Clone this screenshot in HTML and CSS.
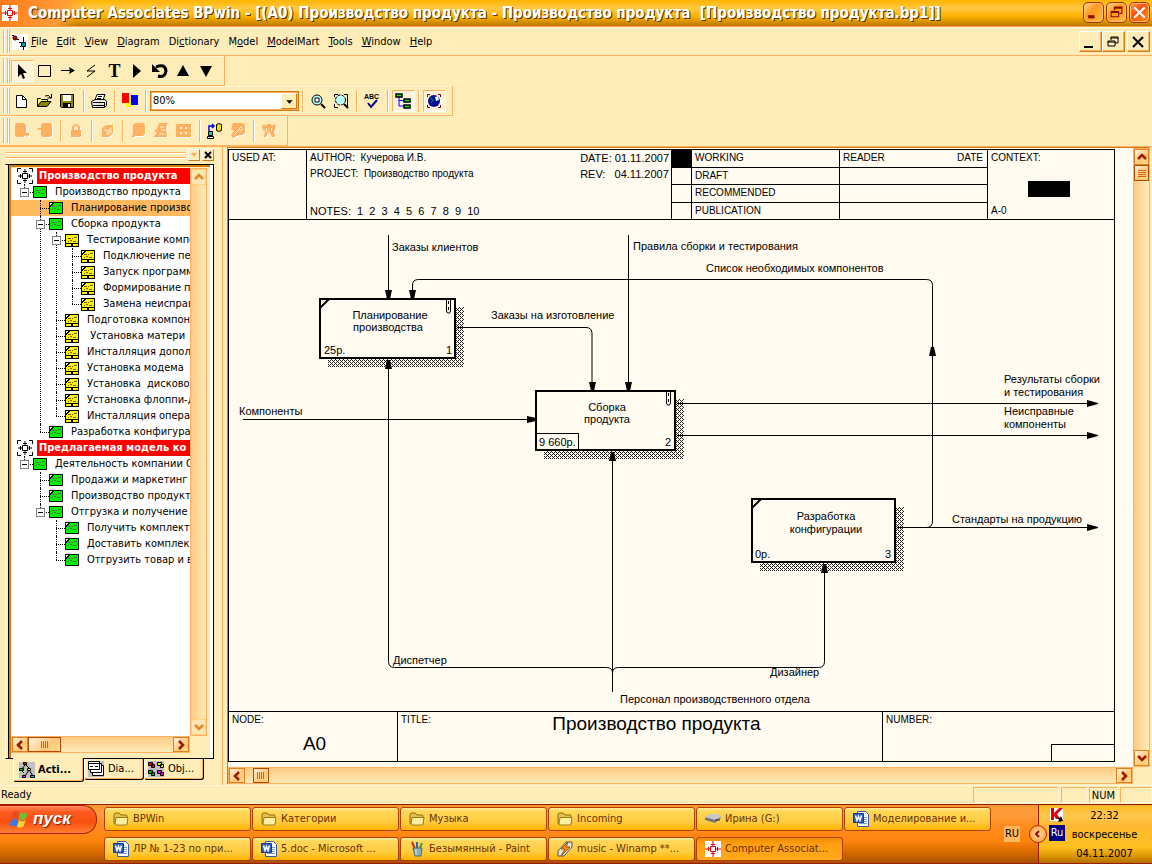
FILE: index.html
```html
<!DOCTYPE html>
<html lang="ru">

<head>
  <meta charset="utf-8">
  <title>Computer Associates BPwin</title>
  <link rel="stylesheet" href="styles.css">
</head>

<body>
  <svg class="defs" aria-hidden="true">
    <symbol id="logo" viewBox="0 0 16 16">
      <rect width="16" height="16" fill="#fff" />
      <path d="M5.500 5.500h5v5h-5zM8 0v5M8 11v5M0 8h5M11 8h5M6 3.500h4M6 12.500h4M3.500 6v4M12.500 6v4" fill="none" stroke="#e00000" />
    </symbol>
    <symbol id="model" viewBox="0 0 16 16">
      <path d="M5.500 5.500h5v5h-5zM8 1v4M8 11v4M1 8h4M11 8h4M6 3.500h4M6 12.500h4M3.500 6v4M12.500 6v4M.5 4V.5H4M12 .5h3.500V4M15.500 12v3.500H12M4 15.500H.5V12" fill="none" stroke="#000" />
    </symbol>
    <symbol id="green" viewBox="0 0 14 14">
      <path d="M0 1h14v12H0z" fill="#0e1200" />
      <path d="M1 2h12v10H1z" fill="#00f000" />
      <path d="M3 5.500h3M7 5.500h1M9 4.500h3M3 8.500h1M5 7.500h2M8 8.500h3" stroke="#587058" />
    </symbol>
    <symbol id="green-leaf" viewBox="0 0 14 14">
      <use href="#green" width="14" height="14" />
      <path d="M1 2h3L1 5z" fill="#fff" />
      <path d="M1 5.500L4.500 2" stroke="#000" />
    </symbol>
    <symbol id="yellow" viewBox="0 0 14 14">
      <path d="M0 1h14v13H0z" fill="#000" />
      <path d="M1 2h12v8H1zM1 11h5v2H1zM8 11h5v2H8z" fill="#fff000" />
      <path d="M3 5.500h3M7 5.500h1M9 4.500h3M3 8.500h1M5 7.500h2M8 8.500h3" stroke="#6a6540" />
    </symbol>
    <symbol id="yellow-leaf" viewBox="0 0 14 14">
      <use href="#yellow" width="14" height="14" />
      <path d="M1 2h3L1 5z" fill="#fff" />
      <path d="M1 5.500L4.500 2" stroke="#000" />
    </symbol>
    <symbol id="chevron" viewBox="0 0 10 10">
      <path d="M1 7l4-4 4 4" fill="none" stroke="currentColor" stroke-width="2.500" />
    </symbol>
    <symbol id="folder" viewBox="0 0 16 16">
      <path d="M1 4q0-2 2-2h3l2 2h5q1 0 1 1v8H2q-1 0-1-1z" fill="#e6c24a" stroke="#8a6a10" />
      <path d="M3 6.500h12l-1 6.500q0 1-1 1H3q-1 0-1-1z" fill="#fff0a0" stroke="#9b7a18" />
    </symbol>
    <symbol id="word" viewBox="0 0 16 16">
      <path d="M4.500 .5h8l3 3v12h-11z" fill="#fff" stroke="#3c5aa0" />
      <path d="M11 6.500h3M11 8.500h3M6 12.500h8M11 10.500h3" stroke="#7d9bd8" />
      <path d="M.5 2.500h10v9H.5z" fill="#2f61c0" stroke="#17377e" />
      <path d="M2.500 4.500l1.500 5 1.500-4 1.500 4 1.500-5" fill="none" stroke="#fff" stroke-width="1.500" />
    </symbol>
    <symbol id="clip" viewBox="0 0 7 16">
      <path d="M1.500 1.500V13l1 2h2l1-2V1.500M3.500 0v2M3.500 9v3M3.500 3v3" fill="none" stroke="#000" />
    </symbol>
    <symbol id="magnifier" viewBox="0 0 16 16">
      <circle cx="7" cy="7" r="5" fill="#b8ffff" stroke="#000" />
      <path d="M5 5h4v4H5z" fill="#fff" stroke="#000" />
      <path d="M11 11l4 4" stroke="#000" stroke-width="2" />
    </symbol>
    <symbol id="restore" viewBox="0 0 14 14">
      <path d="M5 5V2h7v6H9M4.500 3h8M2 6h7v5H2zM1.500 7h8" fill="none" stroke="currentColor" />
    </symbol>
  </svg>

  <header class="titlebar">
    <svg class="icon16"><use href="#logo" /></svg>
    <h1 class="title">Computer Associates BPwin - [(A0) Производство продукта - Производство продукта&nbsp; [Производство продукта.bp1]]</h1>
    <div class="window-buttons">
      <button class="xp-button" aria-label="Свернуть"><svg viewBox="0 0 14 14"><path d="M2 11h6" stroke="#8c1000" stroke-width="3" /></svg></button>
      <button class="xp-button" aria-label="Восстановить"><svg viewBox="0 0 14 14"><use href="#restore" /></svg></button>
      <button class="xp-button xp-close" aria-label="Закрыть"><svg viewBox="0 0 14 14"><path d="M2 2l10 10M12 2L2 12" stroke="#fff" stroke-width="2" /></svg></button>
    </div>
  </header>

  <nav class="menubar">
    <span class="grip"></span>
    <svg class="doc-icon" viewBox="0 0 16 16">
      <rect width="16" height="16" fill="#fff" />
      <path d="M0 1.500h2M5 5.500h2M7 8.500h2M11.500 3v6M9 12.500h-1M11.500 13v3" stroke="#000" fill="none" />
      <circle cx="3" cy="4" r="2" fill="#c00000" stroke="#300" />
      <path d="M9.500 8.500h4v4h-4z" fill="#00a0a0" stroke="#000" />
    </svg>
    <a class="menu-item" href="#"><u>F</u>ile</a>
    <a class="menu-item" href="#"><u>E</u>dit</a>
    <a class="menu-item" href="#"><u>V</u>iew</a>
    <a class="menu-item" href="#"><u>D</u>iagram</a>
    <a class="menu-item" href="#">Di<u>c</u>tionary</a>
    <a class="menu-item" href="#">M<u>o</u>del</a>
    <a class="menu-item" href="#"><u>M</u>odelMart</a>
    <a class="menu-item" href="#"><u>T</u>ools</a>
    <a class="menu-item" href="#"><u>W</u>indow</a>
    <a class="menu-item" href="#"><u>H</u>elp</a>
    <div class="child-buttons">
      <button class="flat-button" aria-label="Minimize"><svg viewBox="0 0 14 14"><path d="M1 12h9" stroke="#000" stroke-width="2" /></svg></button>
      <button class="flat-button" aria-label="Restore"><svg viewBox="0 0 14 14"><use href="#restore" /></svg></button>
      <button class="flat-button flat-close" aria-label="Close"><svg viewBox="0 0 14 14"><path d="M2 2l10 10M12 2L2 12" stroke="#000" stroke-width="2" /></svg></button>
    </div>
  </nav>

  <div class="toolbar">
    <span class="grip"></span>
    <button class="tool pressed" aria-label="Pointer"><svg viewBox="0 0 16 16"><path d="M4 1v13l3-3 2 5 2-1-2-5h4z" /></svg></button>
    <button class="tool" aria-label="Activity box"><svg viewBox="0 0 16 16"><path d="M1.500 2.500h12v11h-12z" fill="none" stroke="#000" /></svg></button>
    <button class="tool" aria-label="Arrow"><svg viewBox="0 0 16 16"><path d="M1 7.500h9" stroke="#000" /><path d="M9 4l6 3.500L9 11l1-3.500z" /></svg></button>
    <button class="tool" aria-label="Squiggle"><svg viewBox="0 0 16 16"><path d="M12 2L4 8h8l-8 6" fill="none" stroke="#000" /></svg></button>
    <button class="tool tool-text" aria-label="Text">T</button>
    <button class="tool" aria-label="Diagram manager"><svg viewBox="0 0 16 16"><path d="M4 1l8 7-8 7z" /></svg></button>
    <button class="tool" aria-label="Go to sibling"><svg viewBox="0 0 16 16"><path d="M4 4q9-4 10 4-1 7-8 5" fill="none" stroke="#000" stroke-width="3" /><path d="M0 1v8h8z" /></svg></button>
    <button class="tool" aria-label="Go to parent"><svg viewBox="0 0 16 16"><path d="M8 2l6 11H2z" /></svg></button>
    <button class="tool" aria-label="Go to child"><svg viewBox="0 0 16 16"><path d="M8 14L2 3h12z" /></svg></button>
  </div>

  <div class="toolbar">
    <span class="grip"></span>
    <button class="tool" aria-label="New"><svg viewBox="0 0 16 16"><path d="M2.500 2.500h6l4 4v8h-10zM8.500 2.500v4h4" fill="#fff" stroke="#000" /></svg></button>
    <button class="tool" aria-label="Open"><svg viewBox="0 0 16 16"><path d="M.5 13V5.500h3l1 1h6V8" fill="#ffff70" stroke="#000" /><path d="M.5 13.500L4 8.500h10l-4 5z" fill="#8a8400" stroke="#000" /><path d="M8 3q4-2 6 2M14.500 1v4h-4" fill="none" stroke="#000" /></svg></button>
    <button class="tool" aria-label="Save"><svg viewBox="0 0 16 16"><path d="M.5 1.500h13v13h-12l-1-1z" fill="#8a8400" stroke="#000" /><path d="M3 2h8v6H3z" fill="#fff" /><path d="M3 10h8v4H3z" /><path d="M8 11h2v3H8z" fill="#fff" /></svg></button>
    <span class="separator"></span>
    <button class="tool" aria-label="Print"><svg viewBox="0 0 16 16"><path d="M4 7l2-5.500h8L12 7" fill="#fff" stroke="#000" /><path d="M7 3.500h4M6 5.500h4" stroke="#000" /><path d="M.5 8.500L4 6.500h10l1.500 2v4l-2 2h-12z" fill="#e8e8e8" stroke="#000" /><path d="M2 9.500h11M2 12.500h11M13.500 9v5" stroke="#000" /><path d="M8 11h2" stroke="#e0d000" /></svg></button>
    <span class="separator"></span>
    <button class="tool" aria-label="Colors"><svg viewBox="0 0 16 16"><path d="M4 5h6v9H4z" fill="#ff0" /><path d="M0 0h7v10H0z" fill="#f00" /><path d="M9 2h7v10H9z" fill="#00f" /></svg></button>
    <span class="separator"></span>
    <div class="zoom-box">
      <select class="zoom-select" aria-label="Zoom">
        <option>80%</option>
      </select>
      <svg class="zoom-arrow" viewBox="0 0 16 16"><path d="M5 7h7l-3.500 4z" /></svg>
    </div>
    <span class="separator"></span>
    <button class="tool" aria-label="Zoom"><svg viewBox="0 0 16 16"><use href="#magnifier" /></svg></button>
    <button class="tool" aria-label="Fit to window"><svg viewBox="0 0 16 16"><path d="M1.500 4V1.500H5M11 1.500h3.500V14M1.500 11v3.500H5" fill="none" stroke="#000" /><circle cx="7.500" cy="7" r="5" fill="#b8ffff" stroke="#000" stroke-dasharray="3 1" /><path d="M11 11l4 4" stroke="#000" stroke-width="2" /></svg></button>
    <span class="separator"></span>
    <button class="tool" aria-label="Spelling"><svg viewBox="0 0 16 16"><text class="abc" x="0" y="6">ABC</text><path d="M4 10l3 4 6-7" fill="none" stroke="#000080" stroke-width="2" /></svg></button>
    <span class="separator"></span>
    <button class="tool pressed" aria-label="Model explorer"><svg viewBox="0 0 16 16"><path d="M4 4v9h5M4 7.500h5" fill="none" stroke="#00f" /><path d="M1 1h6v3H1zM9 6h6v3H9zM9 12h6v3H9z" fill="#0e0" stroke="#000" stroke-width="1.500" /></svg></button>
    <span class="separator"></span>
    <button class="tool pressed" aria-label="ModelMart"><svg viewBox="0 0 16 16"><circle cx="8" cy="8" r="6" fill="#001090" /><path d="M9 4l3-1 1 4-3 1z" fill="#e0ffff" /><path d="M4 5l3 2-2 3" fill="none" stroke="#008080" /><path d="M1.500 4V1.500H4M12 1.500h2.500V4M14.500 12v2.500H12M4 14.500H1.500V12" fill="none" stroke="#800000" /></svg></button>
  </div>

  <div class="toolbar toolbar-dim">
    <span class="grip"></span>
    <button class="tool" disabled aria-label="Open from mart"><svg viewBox="0 0 16 16"><path d="M1 2l2-2h7l2 2v8h3v2l-2 2-2-2-1 2H3l-2-2z" /></svg></button>
    <button class="tool" disabled aria-label="Save to mart"><svg viewBox="0 0 16 16"><path d="M0 2l1 3h3V2l2-2h7l2 2v10l-2 2H6l-2-2V7H1z" /></svg></button>
    <span class="separator"></span>
    <button class="tool" disabled aria-label="Lock"><svg viewBox="0 0 16 16"><path d="M5 7V4q3-4 6 0v3" fill="none" stroke="#ffb060" stroke-width="2" /><path d="M3 7h10v7H3z" /></svg></button>
    <span class="separator"></span>
    <button class="tool" disabled aria-label="Library"><svg viewBox="0 0 16 16"><path d="M3 5l4-3h7v8l-4 4H3z" /><path d="M5 7h3v5M10 6v6M12 4v6" fill="none" stroke="#fff6dc" /></svg></button>
    <span class="separator"></span>
    <button class="tool" disabled aria-label="Review"><svg viewBox="0 0 16 16"><path d="M3 2l2-2h8l2 2v9l-2 2H6l-5 2 2-4z" /></svg></button>
    <button class="tool" disabled aria-label="Versions"><svg viewBox="0 0 16 16"><path d="M6 0h9l-2 4 1 10H0l4-4-3-2 3-2z" /><path d="M7 4h4M8 7h4M6 11h5" stroke="#fff6dc" /></svg></button>
    <button class="tool" disabled aria-label="Grid"><svg viewBox="0 0 16 16"><path d="M0 1h15v13H0z" /><path d="M4 5h2M9 5h2M4 10h2M9 10h2" stroke="#fff6dc" stroke-width="2" /></svg></button>
    <span class="separator"></span>
    <button class="tool" aria-label="Synchronize"><svg viewBox="0 0 16 16"><path d="M2 8V3h5M5 1l2 2-2 2" fill="none" stroke="#00f" stroke-width="1.500" /><path d="M9.500 1.500q2-2 5 0v6q-3 2-5 0z" fill="#f0e000" stroke="#000" /><path d="M1.500 8.500h4v4h-4z" fill="#00d0d0" stroke="#000" /><path d="M.5 13.500h6v2h-6z" fill="#fff" stroke="#000" /></svg></button>
    <button class="tool" disabled aria-label="Tools"><svg viewBox="0 0 16 16"><path d="M3 0h10l2 2v8l-2 2H9l-6 3-2-3 3-4-3-2z" /><path d="M4 12l5-5q0-3 3-3M10 8l3-2" fill="none" stroke="#fff6dc" /></svg></button>
    <span class="separator"></span>
    <button class="tool" disabled aria-label="Users"><svg viewBox="0 0 16 16"><path d="M1 3l2-2 2 2 1-2h4l1 2 2-2 2 2-1 4-1 1 1 6h-3l-2-4-1 2-1-2-2 4H3l1-6-2-1z" /><path d="M5.500 5v3M10.500 5v3M8 8v3" stroke="#fff6dc" /></svg></button>
  </div>

  <main class="workspace">
    <aside class="explorer">
      <div class="explorer-head">
        <span class="explorer-grip"></span>
        <button class="mini-button" aria-label="Collapse"><svg viewBox="0 0 8 8"><path d="M1 2h6L4 6z" fill="#ffb060" /></svg></button>
        <button class="mini-button" aria-label="Close explorer"><svg viewBox="0 0 8 8"><path d="M1 1l6 6M7 1L1 7" stroke="#000" stroke-width="2" /></svg></button>
      </div>
      <div class="explorer-frame">
        <div class="tree">
          <div class="tree-root"><svg class="icon16"><use href="#model" /></svg><b>Производство продукта</b></div>
          <ul>
            <li>
              <div class="row"><button class="toggle" aria-label="Collapse"></button><svg class="node"><use href="#green" /></svg><span>Производство продукта</span></div>
              <ul>
                <li><div class="row selected"><svg class="node"><use href="#green-leaf" /></svg><span>Планирование произво</span></div></li>
                <li>
                  <div class="row"><button class="toggle" aria-label="Collapse"></button><svg class="node"><use href="#green" /></svg><span>Сборка продукта</span></div>
                  <ul>
                    <li>
                      <div class="row"><button class="toggle" aria-label="Collapse"></button><svg class="node"><use href="#yellow" /></svg><span>Тестирование компо</span></div>
                      <ul>
                        <li><div class="row"><svg class="node"><use href="#yellow-leaf" /></svg><span>Подключение пер</span></div></li>
                        <li><div class="row"><svg class="node"><use href="#yellow-leaf" /></svg><span>Запуск программ</span></div></li>
                        <li><div class="row"><svg class="node"><use href="#yellow-leaf" /></svg><span>Формирование п</span></div></li>
                        <li><div class="row"><svg class="node"><use href="#yellow-leaf" /></svg><span>Замена неисправ</span></div></li>
                      </ul>
                    </li>
                    <li><div class="row"><svg class="node"><use href="#yellow-leaf" /></svg><span>Подготовка компоне</span></div></li>
                    <li><div class="row"><svg class="node"><use href="#yellow-leaf" /></svg><span> Установка матери</span></div></li>
                    <li><div class="row"><svg class="node"><use href="#yellow-leaf" /></svg><span>Инсталляция допол</span></div></li>
                    <li><div class="row"><svg class="node"><use href="#yellow-leaf" /></svg><span>Установка модема</span></div></li>
                    <li><div class="row"><svg class="node"><use href="#yellow-leaf" /></svg><span>Установка  дисково</span></div></li>
                    <li><div class="row"><svg class="node"><use href="#yellow-leaf" /></svg><span>Установка флоппи-д</span></div></li>
                    <li><div class="row"><svg class="node"><use href="#yellow-leaf" /></svg><span>Инсталляция опера</span></div></li>
                  </ul>
                </li>
                <li><div class="row"><svg class="node"><use href="#green-leaf" /></svg><span>Разработка конфигура</span></div></li>
              </ul>
            </li>
          </ul>
          <div class="tree-root"><svg class="icon16"><use href="#model" /></svg><b>Предлагаемая модель ко</b></div>
          <ul>
            <li>
              <div class="row"><button class="toggle" aria-label="Collapse"></button><svg class="node"><use href="#green" /></svg><span>Деятельность компании Q</span></div>
              <ul>
                <li><div class="row"><svg class="node"><use href="#green-leaf" /></svg><span>Продажи и маркетинг</span></div></li>
                <li><div class="row"><svg class="node"><use href="#green-leaf" /></svg><span>Производство продукта</span></div></li>
                <li>
                  <div class="row"><button class="toggle" aria-label="Collapse"></button><svg class="node"><use href="#green" /></svg><span>Отгрузка и получение</span></div>
                  <ul>
                    <li><div class="row"><svg class="node"><use href="#green-leaf" /></svg><span>Получить комплекту</span></div></li>
                    <li><div class="row"><svg class="node"><use href="#green-leaf" /></svg><span>Доставить комплек</span></div></li>
                    <li><div class="row"><svg class="node"><use href="#green-leaf" /></svg><span>Отгрузить товар и в</span></div></li>
                  </ul>
                </li>
              </ul>
            </li>
          </ul>
        </div>
        <div class="scroll-v faded">
          <button class="scroll-button" aria-label="Up"><svg><use href="#chevron" /></svg></button>
          <span class="spacer"></span>
          <button class="scroll-button" aria-label="Down"><svg class="down"><use href="#chevron" /></svg></button>
        </div>
        <div class="scroll-h">
          <button class="scroll-button" aria-label="Left"><svg class="left"><use href="#chevron" /></svg></button>
          <span class="thumb thumb-wide"><i class="ridges"></i></span>
          <span class="spacer"></span>
          <button class="scroll-button" aria-label="Right"><svg class="right"><use href="#chevron" /></svg></button>
        </div>
      </div>
      <div class="tabs">
        <button class="tab tab-active"><svg class="icon16" viewBox="0 0 16 16"><rect width="16" height="16" fill="#c0c0c0" /><path d="M6 3L3 7M7 3l4 4M10 8l-4 6M10 8l4 6M2 8l3 3" stroke="#000" fill="none" /><path d="M4.500 .5h3v2h-3z" fill="red" stroke="#000" /><path d="M.5 6.500h4v2h-4z" fill="#0c0" stroke="#000" /><path d="M8.500 6.500h3v2h-3z" fill="#ee0" stroke="#000" /><path d="M3.500 13.500h3v2h-3z" fill="#f0f" stroke="#000" /><path d="M11.500 13.500h4v2h-4z" fill="#0cc" stroke="#000" /></svg>Acti...</button>
        <button class="tab"><svg class="icon16" viewBox="0 0 16 16"><rect width="16" height="16" fill="#c0c0c0" /><path d="M4.500 4.500h11v10h-11z" fill="#fff" stroke="#000" /><path d="M2.500 2.500h11v9h-11z" fill="#fff" stroke="#000" /><path d="M.5 .5h11v8H.5z" fill="#fff" stroke="#000" /><path d="M1 2.500h10M2 5.500h3M7 5.500h3M5 11.500h8" stroke="#000" /></svg>Dia...</button>
        <button class="tab"><svg class="icon16" viewBox="0 0 16 16"><rect width="16" height="16" fill="#c0c0c0" /><g stroke="#000"><path d="M.5 1.500h4v3h-4zM3.500 3.500h3v3h-3z" fill="red" /><path d="M9.500 1.500h4v3h-4zM12.500 3.500h3v3h-3z" fill="#ee0" /><path d="M.5 9.500h4v3h-4zM3.500 11.500h3v3h-3z" fill="#0c0" /><path d="M9.500 9.500h4v3h-4zM12.500 11.500h3v3h-3z" fill="#f0f" /></g></svg>Obj...</button>
      </div>
    </aside>

    <section class="viewport">
      <div class="sheet">
        <div class="kit-head">
          <div class="kit-used">USED AT:</div>
          <div class="kit-author">
            <span>AUTHOR:&nbsp; Кучерова И.В.</span><span class="kit-date">DATE: 01.11.2007</span>
            <span>PROJECT:&nbsp; Производство продукта</span><span class="kit-date">REV:&nbsp;&nbsp; 04.11.2007</span>
            <span class="kit-notes">NOTES:&nbsp; 1&nbsp; 2&nbsp; 3&nbsp; 4&nbsp; 5&nbsp; 6&nbsp; 7&nbsp; 8&nbsp; 9&nbsp; 10</span>
          </div>
          <div class="kit-status">
            <i class="mark marked"></i><span>WORKING</span><span class="reader">READER<em>DATE</em></span>
            <i class="mark"></i><span>DRAFT</span><span></span>
            <i class="mark"></i><span>RECOMMENDED</span><span></span>
            <i class="mark"></i><span>PUBLICATION</span><span></span>
          </div>
          <div class="kit-context">
            <span>CONTEXT:</span>
            <i class="context-box"></i>
            <span>A-0</span>
          </div>
        </div>

        <svg class="diagram" viewBox="229 220 885 491">
          <defs>
            <pattern id="dither" width="4" height="4" patternUnits="userSpaceOnUse">
              <path d="M0 0h1v1H0zM2 0h1v1H2zM1 1h1v1H1zM0 2h1v1H0zM2 2h1v1H2zM3 3h1v1H3z" fill="#222" />
            </pattern>
          </defs>

          <!-- shadows -->
          <g fill="url(#dither)">
            <path d="M456 307h8v60H328v-8h128z" />
            <path d="M676 399h8v60H544v-8h132z" />
            <path d="M896 507h8v64H760v-8h136z" />
          </g>

          <!-- arrows -->
          <g class="arrows">
            <path d="M388.500 235v64" />
            <path d="M628.500 235v156" />
            <path d="M412.500 298v-13q0-5.500 6-5.500h508q6 0 6 6V521q0 6.500-6 6.500" />
            <path d="M457 327.500h129q6 0 6 6V391" />
            <path d="M243 419.500h293" />
            <path d="M677 403.500h418M677 435.500h418M897 527.500h198" />
            <path d="M612.500 692V452" />
            <path d="M612.500 673q0-5.500-6-5.500h-212q-6 0-6-6V360" />
            <path d="M612.500 673q0-5.500 6-5.500h200q6 0 6-6V564" />
          </g>
          <g class="heads">
            <path d="M385 290h7l-2 9h-3zM409 290h7l-2 9h-3zM589 382h7l-2 9h-3zM625 382h7l-2 9h-3z" />
            <path d="M387 360h3l2 9h-7zM611 452h3l2 9h-7zM823 564h3l2 9h-7zM931 347h3l2 9h-7z" />
            <path d="M527 416l9 2v3l-9 2zM1087 400l11 3v1l-11 3zM1087 432l11 3v1l-11 3zM1087 524l11 3v1l-11 3z" />
          </g>

          <!-- activities -->
          <g class="boxes">
            <rect x="320" y="299" width="135" height="59" />
            <rect x="536" y="391" width="139" height="59" />
            <rect x="752" y="499" width="143" height="63" />
            <path d="M320 308l9-9M752 508l9-9" />
          </g>
          <path d="M537 433.500h41.500V450" fill="none" stroke="#000" />
          <use href="#clip" x="445" y="298" width="7" height="16" />
          <use href="#clip" x="665" y="390" width="7" height="16" />

          <g class="labels centered">
            <text x="390" y="319">Планирование</text>
            <text x="388" y="331">производства</text>
            <text x="607" y="411">Сборка</text>
            <text x="607" y="423">продукта</text>
            <text x="826" y="520">Разработка</text>
            <text x="826" y="533">конфигурации</text>
          </g>
          <g class="labels">
            <text x="392" y="251">Заказы клиентов</text>
            <text x="633" y="250">Правила сборки и тестирования</text>
            <text x="706" y="272">Список необходимых компонентов</text>
            <text x="491" y="319">Заказы на изготовление</text>
            <text x="239" y="415">Компоненты</text>
            <text x="1004" y="383">Результаты сборки</text>
            <text x="1004" y="396">и тестирования</text>
            <text x="1004" y="415">Неисправные</text>
            <text x="1004" y="428">компоненты</text>
            <text x="952" y="523">Стандарты на продукцию</text>
            <text x="393" y="664">Диспетчер</text>
            <text x="770" y="676">Дизайнер</text>
            <text x="620" y="703">Персонал производственного отдела</text>
          </g>
          <g class="labels">
            <text x="324" y="354">25р.</text>
            <text x="446" y="354">1</text>
            <text x="539" y="446">9 660р.</text>
            <text x="665" y="446">2</text>
            <text x="755" y="558">0р.</text>
            <text x="885" y="558">3</text>
          </g>
        </svg>

        <div class="kit-foot">
          <div class="foot-node"><span>NODE:</span><strong>A0</strong></div>
          <div class="foot-title"><span>TITLE:</span><strong>Производство продукта</strong></div>
          <div class="foot-number"><span>NUMBER:</span><i class="corner"></i></div>
        </div>
      </div>
      <div class="scroll-v">
        <button class="scroll-button" aria-label="Up"><svg><use href="#chevron" /></svg></button>
        <span class="thumb thumb-v"><i class="ridges"></i></span>
        <span class="spacer"></span>
        <button class="scroll-button" aria-label="Down"><svg class="down"><use href="#chevron" /></svg></button>
      </div>
      <div class="scroll-h">
        <button class="scroll-button" aria-label="Left"><svg class="left"><use href="#chevron" /></svg></button>
        <span class="thumb thumb-far"><i class="ridges"></i></span>
        <span class="spacer"></span>
        <button class="scroll-button" aria-label="Right"><svg class="right"><use href="#chevron" /></svg></button>
      </div>
    </section>
  </main>

  <footer class="statusbar">
    <span class="status-text">Ready</span>
    <span class="pane pane-wide"></span>
    <span class="pane"></span>
    <span class="pane">NUM</span>
    <span class="pane pane-last"></span>
  </footer>

  <div class="taskbar">
    <button class="start">
      <svg viewBox="0 0 20 20"><path d="M4 4q3-2 6 0l-1 6q-3-2-6 0z" fill="#e84a20" /><path d="M11 4q3 2 7 0l-2 6q-3 2-6 0z" fill="#6cc030" /><path d="M3 11q3-2 6 0l-1 6q-3-2-7 0z" fill="#3a78e8" /><path d="M10 11q3 2 6 0l-2 6q-3 2-6 0z" fill="#f8d030" /></svg>
      пуск
    </button>
    <div class="tasks">
      <button class="task"><svg class="icon16"><use href="#folder" /></svg>BPWin</button>
      <button class="task"><svg class="icon16"><use href="#folder" /></svg>Категории</button>
      <button class="task"><svg class="icon16"><use href="#folder" /></svg>Музыка</button>
      <button class="task"><svg class="icon16"><use href="#folder" /></svg>Incoming</button>
      <button class="task"><svg class="icon16" viewBox="0 0 16 16"><path d="M0 7l5-3h9l2 3-6 5-10-3z" fill="#777" /><path d="M0 6l5-3h9l2 3-6 3z" fill="#c8c8c8" /><path d="M10 9h5" stroke="#333" /></svg>Ирина (G:)</button>
      <button class="task"><svg class="icon16"><use href="#word" /></svg>Моделирование и...</button>
      <button class="task"><svg class="icon16"><use href="#word" /></svg>ЛР № 1-23 по при...</button>
      <button class="task"><svg class="icon16"><use href="#word" /></svg>5.doc - Microsoft ...</button>
      <button class="task"><svg class="icon16" viewBox="0 0 16 16"><path d="M6 8L3 1" stroke="#d03020" stroke-width="2" /><path d="M8 10V1" stroke="#2f60c0" stroke-width="2" /><path d="M10 9l3-7" stroke="#30a040" stroke-width="2" /><path d="M4 7h9l-1 8H6z" fill="#8ab0b8" stroke="#4a6a70" /><path d="M7 8v6" stroke="#d8ecf0" /></svg>Безымянный - Paint</button>
      <button class="task"><svg class="icon16" viewBox="0 0 16 16"><path d="M9 1h6v5L7 15H1v-5z" fill="#e0e0e0" stroke="#555" /><path d="M11 1L4 8h4l-4 7 9-9H9z" fill="#ff9a10" stroke="#a05000" /></svg>music - Winamp **...</button>
      <button class="task task-active"><svg class="icon16"><use href="#logo" /></svg>Computer Associat...</button>
    </div>
    <span class="lang">RU</span>
    <div class="tray">
      <button class="tray-toggle" aria-label="Show hidden icons"><svg viewBox="0 0 10 10"><path d="M6 2L3 5l3 3" fill="none" stroke="#8c1000" stroke-width="2" /></svg></button>
      <div class="tray-icons">
        <svg viewBox="0 0 16 16"><path d="M1 1h13v13H1z" fill="#fff" /><path d="M2 1h3v5l5-5h4L8 7l3 5H7L5 9v4H2z" fill="#e00010" /><path d="M8 10l3 1 1-2 2 5-5 1 1-2z" /></svg>
        <span class="layout">Ru</span>
      </div>
      <div class="clock"><span>22:32</span><span>воскресенье</span><span>04.11.2007</span></div>
    </div>
  </div>
</body>

</html>
```
FILE: styles.css
```css
* {
  box-sizing: border-box;
  margin: 0;
  padding: 0;
}

:root {
  --face: #feecb9;
  --line: #ffb060;
  --edge: #d17a10;
  --paper: #fffbf0;
  --brick: #9c1c00;
}

body {
  display: flex;
  flex-direction: column;
  height: 100vh;
  overflow: hidden;
  background: var(--face);
  color: #000;
  font-family: "DejaVu Sans Condensed", "DejaVu Sans", sans-serif;
  font-size: 11px;
  line-height: 16px;
}

button {
  background: none;
  border: 0;
  font: inherit;
  color: inherit;
}

svg {
  display: block;
  flex: none;
}

.defs {
  position: absolute;
  width: 0;
  height: 0;
}

.icon16 {
  width: 16px;
  height: 16px;
}

.spacer {
  flex: 1;
}

/* title bar */

.titlebar {
  flex: none;
  display: flex;
  align-items: center;
  height: 28px;
  padding: 0 2px 2px 2px;
  border-bottom: 1px solid #fff6dc;
  background:
    linear-gradient(115deg, #ff7a18 0, #ff9c38 60px, transparent 80px),
    linear-gradient(#ffb400 0, #ffbe20 4px, #ffc845 8px, #ffb400 16px, #c88400 24px, #b87400 26px, #ffa040 26px);
}

.title {
  flex: 1;
  margin-left: 10px;
  overflow: hidden;
  color: #fff;
  font-size: 15px;
  font-weight: bold;
  line-height: 24px;
  white-space: nowrap;
  text-shadow: 1px 1px #5a3200;
}

.window-buttons {
  display: flex;
  gap: 2px;
}

.xp-button {
  width: 21px;
  height: 21px;
  padding: 2px;
  border: 1px solid #a83000;
  border-radius: 5px;
  background: linear-gradient(135deg, #ffd890, #ff9a20 40%, #ffb840);
  box-shadow: inset 0 0 0 1px #ffc070;
  color: #8c1000;
}

.xp-button svg {
  width: 15px;
  height: 15px;
}

.xp-close {
  background: linear-gradient(135deg, #ff9a60, #ff5010 40%, #ff9000);
}

/* menu */

.menubar {
  flex: none;
  display: flex;
  align-items: center;
  height: 28px;
  border-bottom: 1px solid var(--line);
}

.grip {
  flex: none;
  align-self: stretch;
  width: 7px;
  margin: 2px 1px 2px 3px;
  border: solid var(--line);
  border-width: 0 1px;
  background: linear-gradient(90deg, #fff 1px, var(--face) 1px, var(--face) 3px, var(--line) 3px, var(--line) 4px, #fff 4px);
}

.doc-icon {
  width: 16px;
  height: 16px;
  margin-left: 1px;
}

.menu-item {
  padding: 0 6px 0 3px;
  color: #000;
  text-decoration: none;
}

.child-buttons {
  display: flex;
  margin-left: auto;
  margin-right: 2px;
}

.flat-button {
  width: 23px;
  height: 21px;
  padding: 3px;
  border: 1px solid;
  border-color: #fff var(--edge) var(--edge) #fff;
  box-shadow: inset -1px -1px var(--line);
}

.flat-button svg {
  width: 14px;
  height: 14px;
}

.flat-close {
  margin-left: 2px;
}

/* toolbars */

.toolbar {
  flex: none;
  align-self: flex-start;
  display: flex;
  align-items: center;
  height: 30px;
  padding-right: 6px;
  border: solid var(--line);
  border-width: 0 1px 1px 0;
  box-shadow: inset 0 1px #fff6dc;
}

.tool {
  width: 23px;
  height: 22px;
  padding: 3px;
}

.tool svg {
  width: 16px;
  height: 16px;
}

.tool-text {
  padding: 0;
  font-family: "Liberation Serif", serif;
  font-size: 18px;
  font-weight: bold;
}

.pressed {
  border: 1px solid;
  border-color: var(--line) #fff #fff var(--line);
  background: #fff4da;
  padding: 2px;
}

.toolbar-dim .tool:disabled svg {
  fill: #ffb060;
  filter: drop-shadow(1px 1px #fff);
}

.separator {
  width: 2px;
  height: 22px;
  margin: 0 3px;
  border-left: 1px solid var(--line);
  background: #fff;
}

.abc {
  font-family: "Liberation Sans", sans-serif;
  font-size: 7px;
  font-weight: bold;
}

.zoom-box {
  position: relative;
  width: 149px;
  height: 20px;
  border: 1px solid var(--edge);
  box-shadow: inset 0 0 0 1px var(--line);
  background: #fff;
}

.zoom-select {
  width: 100%;
  height: 18px;
  padding-left: 2px;
  border: 0;
  background: none;
  appearance: none;
  font: inherit;
}

.zoom-arrow {
  position: absolute;
  top: 1px;
  right: 1px;
  width: 16px;
  height: 16px;
  border: 1px solid;
  border-color: #fff var(--edge) var(--edge) #fff;
  background: var(--face);
  pointer-events: none;
}

/* explorer */

.workspace {
  flex: 1;
  display: flex;
  min-height: 0;
  border-top: 1px solid var(--line);
}

.explorer {
  flex: none;
  display: flex;
  flex-direction: column;
  width: 223px;
  padding: 2px 8px 0 5px;
  border-right: 1px solid var(--line);
}

.explorer-head {
  display: flex;
  align-items: center;
  gap: 2px;
  height: 12px;
}

.explorer-grip {
  flex: 1;
  height: 6px;
  border: solid var(--line);
  border-width: 1px 0;
  box-shadow: inset 0 1px #fff, 0 1px #fff;
}

.mini-button {
  width: 12px;
  height: 12px;
  padding: 1px;
  border: 1px solid;
  border-color: #fff var(--edge) var(--edge) #fff;
}

.mini-button svg {
  width: 8px;
  height: 8px;
}

.explorer-frame {
  flex: 1;
  display: grid;
  grid-template-columns: 1fr 17px;
  grid-template-rows: 1fr 17px;
  min-height: 0;
  margin-top: 3px;
  padding: 3px 6px 5px 5px;
  border: 1px solid #000;
  border-color: #000 #000 #000 #fff;
  box-shadow: inset 2px 0 var(--face), inset 3px 0 #000, inset 5px 0 var(--edge), inset -3px 0 #fff, inset 0 2px var(--edge);
}

.tree {
  overflow: hidden;
  background: #fff;
}

.tree ul {
  list-style: none;
  padding-left: 16px;
}

.tree > ul {
  padding-left: 9px;
}

.tree li {
  position: relative;
}

.tree li::before {
  content: "";
  position: absolute;
  top: 0;
  left: 4px;
  height: 100%;
  border-left: 1px dotted #000;
}

.tree li:last-child::before {
  height: 8px;
}

.tree-root {
  display: flex;
  align-items: center;
  gap: 4px;
  height: 16px;
  padding-left: 6px;
  white-space: nowrap;
}

.tree-root b {
  flex: 1;
  padding-left: 2px;
  background: #f00;
  color: #fff;
}

.row {
  display: flex;
  align-items: center;
  height: 16px;
  white-space: pre;
}

.row::before {
  content: "";
  flex: none;
  width: 9px;
  margin-left: 4px;
  border-top: 1px dotted #000;
}

.selected {
  margin-left: -25px;
  padding-left: 25px;
  background: #ffba60;
}

.toggle {
  position: absolute;
  top: 4px;
  left: 0;
  width: 9px;
  height: 9px;
  border: 1px solid #808080;
  background: linear-gradient(#000, #000) center / 5px 1px no-repeat #fff;
}

.node {
  width: 14px;
  height: 14px;
  margin-right: 8px;
  shape-rendering: crispEdges;
}

.tabs {
  display: flex;
  align-items: flex-start;
  height: 26px;
  padding-left: 8px;
}

.tab {
  display: flex;
  align-items: center;
  gap: 4px;
  width: 60px;
  height: 21px;
  padding-left: 3px;
  border: solid #000;
  border-width: 0 1px 1px 0;
  border-left: 1px solid #fff;
  border-radius: 0 0 3px 3px;
  box-shadow: inset -1px -1px var(--line);
}

.tab-active {
  width: 71px;
  height: 24px;
  margin-top: -1px;
  padding-left: 5px;
  gap: 3px;
  background: var(--face);
  font-weight: bold;
}

/* scrollbars */

.scroll-v,
.scroll-h {
  display: flex;
  border: 1px solid var(--line);
}

.scroll-v {
  flex-direction: column;
  width: 17px;
  background: linear-gradient(90deg, #fdcb82, #ffeab8);
}

.scroll-h {
  height: 17px;
  background: linear-gradient(#fdcb82, #ffeab8);
}

.scroll-button,
.thumb {
  flex: none;
  display: flex;
  align-items: center;
  justify-content: center;
  width: 16px;
  height: 15px;
  border: 1px solid #e08020;
  background: linear-gradient(135deg, #fff4e0, #ffc878 60%, #ffdc90);
  color: var(--brick);
}

.scroll-v .scroll-button,
.scroll-v .thumb {
  width: 15px;
  height: 16px;
}

.faded .scroll-button {
  border-color: #ffd080;
  background: #ffe7b4;
  color: #e08a28;
}

.scroll-button svg {
  width: 10px;
  height: 10px;
}

.down {
  transform: rotate(180deg);
}

.left {
  transform: rotate(-90deg);
}

.right {
  transform: rotate(90deg);
}

.thumb {
  border-color: #b84800;
}

.thumb-wide {
  width: 33px;
}

.thumb-far {
  margin-left: 8px;
}

.ridges {
  width: 8px;
  height: 7px;
  background: repeating-linear-gradient(90deg, #d06a10 0, #d06a10 1px, transparent 1px, transparent 2px);
}

.thumb-v .ridges {
  background: repeating-linear-gradient(#d06a10 0, #d06a10 1px, transparent 1px, transparent 2px);
}

/* diagram window */

.viewport {
  flex: 1;
  display: grid;
  grid-template-columns: 1fr 17px;
  grid-template-rows: 1fr 17px;
  min-width: 0;
  margin: 0 2px 1px 4px;
  border: solid var(--edge);
  border-width: 1px 0 0 1px;
  background: var(--face);
}

.sheet {
  display: flex;
  flex-direction: column;
  min-width: 0;
  min-height: 0;
  padding: 1px 18px 5px 0;
  background: var(--paper);
  font-family: "Liberation Sans", sans-serif;
  font-size: 10px;
  line-height: 16px;
}

.kit-head,
.kit-foot {
  flex: none;
  display: grid;
  border: 1px solid #000;
}

.kit-head {
  grid-template-columns: 77fr 365fr 316fr 127fr;
  height: 71px;
}

.kit-head > div + div,
.kit-foot > div + div {
  border-left: 1px solid #000;
}

.kit-used,
.kit-context {
  padding-left: 3px;
}

.kit-author {
  display: grid;
  grid-template-columns: 1fr auto;
  grid-template-rows: 16px 16px 1fr;
  padding: 0 2px 0 3px;
}

.kit-notes {
  align-self: end;
}

.kit-date,
.kit-notes {
  font-size: 11px;
}

.kit-status {
  display: grid;
  grid-template-columns: 19px 1fr 1fr;
  grid-template-rows: repeat(4, 1fr);
  gap: 1px;
  background: #000;
}

.kit-status span {
  padding-left: 3px;
  background: var(--paper);
}

.mark {
  background: var(--paper);
}

.marked {
  background: #000;
}

.kit-status .reader {
  display: flex;
  justify-content: space-between;
  padding-right: 4px;
}

.reader em {
  font-style: normal;
}

.kit-context {
  display: flex;
  flex-direction: column;
  justify-content: space-between;
}

.context-box {
  align-self: center;
  width: 42px;
  height: 16px;
  margin: 8px 8px 0 0;
  background: #000;
}

.diagram {
  flex: 1;
  width: 100%;
  min-height: 0;
  border: solid #000;
  border-width: 0 1px;
}

.arrows {
  fill: none;
  stroke: #000;
}

.boxes {
  fill: var(--paper);
  stroke: #000;
  stroke-width: 2;
}

.labels {
  font-size: 11px;
}

.centered {
  text-anchor: middle;
}

.kit-foot {
  grid-template-columns: 168fr 485fr 232fr;
  height: 51px;
}

.kit-foot > div {
  display: flex;
  position: relative;
  padding-left: 3px;
}

.kit-foot strong {
  flex: 1;
  font-size: 19px;
  font-weight: normal;
  line-height: 24px;
  text-align: center;
}

.foot-node span {
  position: absolute;
  top: 0;
  left: 3px;
}

.foot-node strong {
  align-self: flex-end;
  margin-bottom: 5px;
}

.corner {
  align-self: flex-end;
  width: 63px;
  height: 17px;
  margin-left: auto;
  border: solid #000;
  border-width: 1px 0 0 1px;
}

/* status bar */

.statusbar {
  flex: none;
  display: flex;
  align-items: center;
  gap: 2px;
  height: 19px;
  border-top: 1px solid #fff6dc;
}

.status-text {
  flex: 1;
  padding-left: 1px;
}

.pane {
  min-width: 26px;
  height: 16px;
  padding: 0 2px;
  border: 1px solid;
  border-color: var(--line) #fff6dc #fff6dc var(--line);
  line-height: 15px;
}

.pane-wide {
  width: 86px;
}

.pane-last {
  width: 32px;
}

/* taskbar */

.taskbar {
  flex: none;
  display: flex;
  height: 60px;
  border: solid var(--brick);
  border-width: 1px 0;
  background: linear-gradient(#ff9a30 0, #ff9c3c 10px, #ff8c20 20px, #ff8410 35px, #e07000 45px, #a85000 58px);
}

.start {
  display: flex;
  align-items: center;
  gap: 3px;
  width: 97px;
  height: 29px;
  padding: 0 0 2px 8px;
  border: 1px solid #b02000;
  border-left: 0;
  border-radius: 0 14px 14px 0;
  background: linear-gradient(#ff8a60 0, #ff5a20 6px, #f85010 16px, #ff8030 27px);
  color: #fff;
  font-family: "Liberation Sans", sans-serif;
  font-size: 17px;
  font-style: italic;
  font-weight: bold;
  text-shadow: 1px 1px 1px #802000;
}

.start svg {
  width: 22px;
  height: 22px;
}

.tasks {
  flex: 1;
  display: grid;
  grid-template-columns: repeat(6, 147px);
  grid-template-rows: 24px 24px;
  gap: 6px 1px;
  padding: 2px 0 0 7px;
}

.task {
  display: flex;
  align-items: center;
  gap: 4px;
  min-width: 0;
  padding: 0 8px;
  border: 1px solid #b04000;
  border-radius: 3px;
  background: linear-gradient(#fff0a0 0, #ffd75a 3px, #ffcc40 14px, #ffb400 22px);
  color: #6b3000;
  white-space: nowrap;
}

.task-active {
  background: linear-gradient(#f08a00, #ffa010 6px, #ffa81c);
}

.lang {
  align-self: center;
  padding: 0 1px;
  margin-right: 18px;
  background: #ffb860;
}

.tray {
  display: flex;
  align-items: center;
  width: 114px;
  border-left: 1px solid var(--brick);
  background: linear-gradient(#ffb820 0, #ffc850 10px, #ffb830 22px, #ffc020 42px, #d89000 52px, #b07000 58px);
}

.tray-toggle {
  flex: none;
  display: flex;
  align-items: center;
  justify-content: center;
  width: 18px;
  height: 18px;
  margin-left: -10px;
  border: 1px solid #b03000;
  border-radius: 50%;
  background: radial-gradient(#ffe0b0, #ff9020);
}

.tray-toggle svg {
  width: 10px;
  height: 10px;
}

.tray-icons {
  display: flex;
  flex-direction: column;
  gap: 2px;
  width: 16px;
  height: 54px;
  margin-left: 2px;
}

.layout {
  background: #000080;
  color: #fff;
  text-align: center;
}

.clock {
  flex: 1;
  display: flex;
  flex-direction: column;
  align-items: center;
  padding-right: 8px;
  line-height: 19px;
}
```
